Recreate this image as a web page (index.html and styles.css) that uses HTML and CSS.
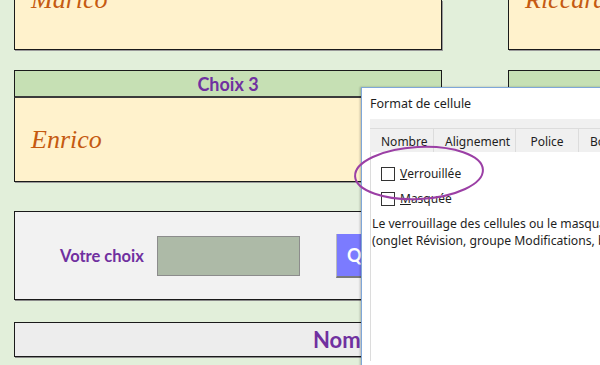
FILE: index.html
```html
<!DOCTYPE html>
<html lang="fr">

<head>
  <meta charset="UTF-8">
  <meta name="viewport" content="width=device-width, initial-scale=1.0">
  <title>Choix des prénoms</title>
  <link rel="stylesheet" href="styles.css">
</head>

<body>
  <div class="sheet">
    <div class="pair top">
      <div class="card"><span class="name">Marico</span></div>
      <div class="card"><span class="name">Riccardo</span></div>
    </div>

    <div class="pair mid">
      <div class="choice">
        <div class="choice-head">Choix 3</div>
        <div class="card"><span class="name">Enrico</span></div>
      </div>
      <div class="choice">
        <div class="choice-head">Choix 4</div>
        <div class="card"><span class="name">Giulia</span></div>
      </div>
    </div>

    <div class="panel pick">
      <span class="pick-label">Votre choix</span>
      <div class="pick-input"></div>
      <button class="pick-btn">Quitter</button>
    </div>

    <div class="panel result">Nombre de tentatives</div>
  </div>

  <!-- boite de dialogue Excel -->
  <div class="dialog">
    <div class="dialog-title">Format de cellule</div>
    <div class="dialog-body">
      <ul class="tabs">
        <li>Nombre</li>
        <li>Alignement</li>
        <li>Police</li>
        <li>Bordure</li>
      </ul>
      <div class="tab-panel">
        <label class="check"><span class="box"></span><u>V</u>errouillée</label>
        <label class="check"><span class="box"></span><u>M</u>asquée</label>
        <p class="note">Le verrouillage des cellules ou le masquage des formules n'a aucun effet tant que la feuille n'est pas protégée<br>
          (onglet Révision, groupe Modifications, bouton Protéger la feuille).</p>
      </div>
    </div>
  </div>

  <svg class="circle" width="140" height="62" viewBox="0 0 140 62">
    <ellipse cx="67" cy="29" rx="64" ry="26" transform="rotate(-3 67 29)" />
  </svg>
</body>

</html>
```

FILE: styles.css
```css
/* page de base */
body {
  margin: 0;
  width: 600px;
  height: 365px;
  overflow: hidden;
  background-color: #e2efda;
  position: relative;
}

/* feuille */
.sheet {
  padding-left: 14px;
}

.pair {
  display: grid;
  grid-template-columns: 428px 428px;
  column-gap: 66px;
}

.card {
  box-sizing: border-box;
  background-color: #fff2cc;
  border: 1px solid #1a1a1a;
  box-shadow: 1px 1px 0 #9a9a9a;
  padding-left: 16px;
}

.name {
  font-family: "Liberation Serif", serif;
  font-style: italic;
  font-size: 26px;
  color: #c55a11;
}

.top .card {
  height: 50px;
  border-top: none;
}

.top .name {
  display: block;
  line-height: 26px;
  margin-top: -13px;
}

.mid {
  margin-top: 20px;
}

.choice-head {
  box-sizing: border-box;
  height: 28px;
  background-color: #c6e0b4;
  border: 1px solid #1a1a1a;
  border-bottom: 2px solid #3b3b3b;
  text-align: center;
  font-family: Lato, sans-serif;
  font-weight: bold;
  font-size: 18px;
  line-height: 26px;
  color: #7030a0;
}

.mid .card {
  height: 84px;
  border-top: none;
  display: flex;
  align-items: center;
}

/* panneaux du bas */
.panel {
  box-sizing: border-box;
  width: 820px;
  border: 1px solid #1a1a1a;
  box-shadow: 1px 1px 0 #8a8a8a;
}

.pick {
  margin-top: 29px;
  height: 89px;
  background-color: #f2f2f2;
  display: flex;
  align-items: center;
  padding-left: 45px;
}

.pick-label {
  font-family: Lato, sans-serif;
  font-weight: bold;
  font-size: 16.5px;
  color: #7030a0;
  width: 97px;
}

.pick-input {
  box-sizing: border-box;
  width: 143px;
  height: 40px;
  background-color: #adbaa7;
  border: 1px solid #8c8c8c;
  margin-top: 1px;
}

.pick-btn {
  margin-left: 36px;
  width: 90px;
  height: 44px;
  border: none;
  border-bottom: 2px solid #7a7a7a;
  border-left: 1px solid #bbb;
  background-color: #7b7bff;
  color: #fff;
  font-family: Lato, sans-serif;
  font-weight: bold;
  font-size: 18px;
  text-align: left;
  padding-left: 10px;
}

.result {
  margin-top: 22px;
  height: 35px;
  background-color: #ededed;
  padding-left: 298px;
  font-family: Lato, sans-serif;
  font-weight: bold;
  font-size: 22px;
  line-height: 33px;
  color: #7030a0;
}

/* dialogue */
.dialog {
  position: absolute;
  left: 361px;
  top: 87px;
  width: 320px;
  height: 300px;
  background-color: #fff;
  border-left: 1px solid #7fa7d8;
  border-top: 1px solid #7fa7d8;
  box-shadow: -1px 0 2px rgba(0, 0, 0, 0.25);
  font-family: "Noto Sans", sans-serif;
  font-size: 12px;
  color: #1e1e1e;
}

.dialog-title {
  height: 31px;
  line-height: 31px;
  padding-left: 8px;
  font-size: 12.5px;
}

.dialog-body {
  padding-left: 8px;
}

.tabs {
  list-style: none;
  margin: 0;
  padding: 9px 0 0 0;
  background-color: #f0f0f0;
  display: flex;
}

.tabs li {
  box-sizing: border-box;
  height: 24px;
  line-height: 25px;
  border-top: 1px solid #dcdcdc;
  border-right: 1px solid #dcdcdc;
  background-color: #f0f0f0;
  padding: 0 11px;
  white-space: nowrap;
}

.tabs li:first-child {
  width: 64px;
}

.tabs li:nth-child(2) {
  width: 82px;
  text-align: center;
}

.tabs li:nth-child(3) {
  width: 63px;
  text-align: center;
}

.tab-panel {
  border-left: 1px solid #dcdcdc;
  padding: 9px 0 0 10px;
  height: 200px;
}

.check {
  display: flex;
  align-items: center;
  height: 25px;
  line-height: 14px;
}

.box {
  box-sizing: border-box;
  width: 14px;
  height: 14px;
  border: 1px solid #333;
  background-color: #fff;
  margin-right: 5px;
}

.note {
  margin: 5px 0 0 -9px;
  line-height: 16.5px;
  font-size: 12.2px;
  white-space: nowrap;
}

/* cercle violet */
.circle {
  position: absolute;
  left: 352px;
  top: 144px;
}

.circle ellipse {
  fill: none;
  stroke: #9b3fa5;
  stroke-width: 2;
}
```
